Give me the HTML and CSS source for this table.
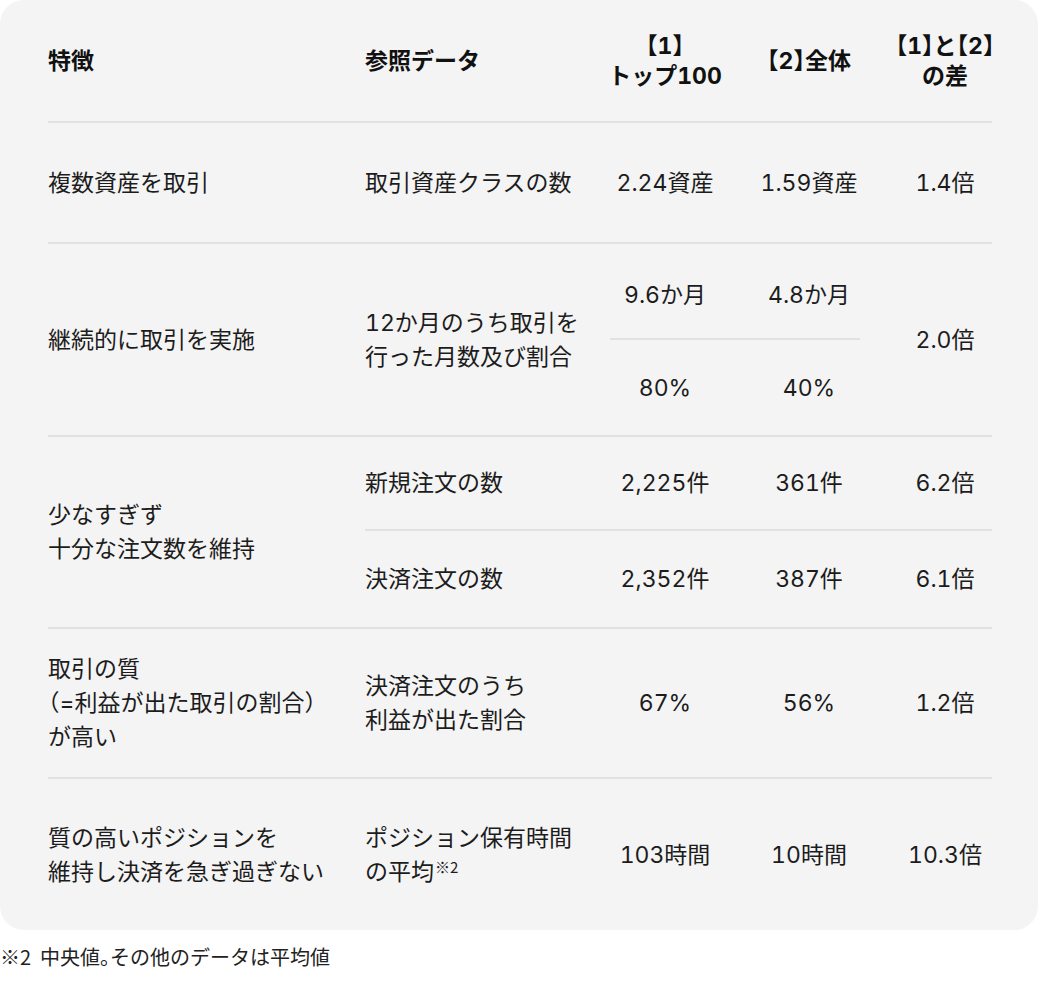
FILE: index.html
```html
<!DOCTYPE html>
<html lang="ja">
<head>
<meta charset="utf-8">
<title>比較表</title>
<link rel="stylesheet" href="styles.css">
</head>
<body>
<div class="card">
  <div class="row head">
    <div class="cell"><div class="in">特徴</div></div>
    <div class="cell"><div class="in">参照データ</div></div>
    <div class="cell c"><div class="in"><span class="p">【</span>1<span class="p">】</span><br>トップ100</div></div>
    <div class="cell c"><div class="in"><span class="p">【</span>2<span class="p">】</span>全体</div></div>
    <div class="cell c nw"><div class="in"><span class="p">【</span>1<span class="p">】</span>と<span class="p">【</span>2<span class="p">】</span><br>の差</div></div>
  </div>

  <div class="row r1">
    <div class="cell"><div class="in">複数資産を取引</div></div>
    <div class="cell"><div class="in">取引資産クラスの数</div></div>
    <div class="cell c"><div class="in">2.24資産</div></div>
    <div class="cell c"><div class="in">1.59資産</div></div>
    <div class="cell c"><div class="in">1.4倍</div></div>
  </div>

  <div class="row r2">
    <div class="cell span3"><div class="in">継続的に取引を実施</div></div>
    <div class="cell span3"><div class="in">12か月のうち取引を<br>行った月数及び割合</div></div>
    <div class="cell c top"><div class="in">9.6か月</div></div>
    <div class="cell c top"><div class="in">4.8か月</div></div>
    <div class="cell c span3 last"><div class="in">2.0倍</div></div>
    <div class="divider d34"></div>
    <div class="cell c bot"><div class="in">80%</div></div>
    <div class="cell c bot"><div class="in">40%</div></div>
  </div>

  <div class="row r3">
    <div class="cell span3"><div class="in">少なすぎず<br>十分な注文数を維持</div></div>
    <div class="cell top"><div class="in">新規注文の数</div></div>
    <div class="cell c top"><div class="in">2,225件</div></div>
    <div class="cell c top"><div class="in">361件</div></div>
    <div class="cell c top"><div class="in">6.2倍</div></div>
    <div class="divider d25"></div>
    <div class="cell bot"><div class="in">決済注文の数</div></div>
    <div class="cell c bot"><div class="in">2,352件</div></div>
    <div class="cell c bot"><div class="in">387件</div></div>
    <div class="cell c bot"><div class="in">6.1倍</div></div>
  </div>

  <div class="row r4">
    <div class="cell"><div class="in">取引の質<br><span class="p">（</span>=利益が出た取引の割合<span class="p">）</span><br>が高い</div></div>
    <div class="cell"><div class="in">決済注文のうち<br>利益が出た割合</div></div>
    <div class="cell c"><div class="in">67%</div></div>
    <div class="cell c"><div class="in">56%</div></div>
    <div class="cell c"><div class="in">1.2倍</div></div>
  </div>

  <div class="row r5">
    <div class="cell"><div class="in">質の高いポジションを<br>維持し決済を急ぎ過ぎない</div></div>
    <div class="cell"><div class="in">ポジション保有時間<br>の平均<sup class="mark">※2</sup></div></div>
    <div class="cell c"><div class="in">103時間</div></div>
    <div class="cell c"><div class="in">10時間</div></div>
    <div class="cell c"><div class="in">10.3倍</div></div>
  </div>
</div>
<p class="note">※2&nbsp;&nbsp;中央値<span class="p">。</span>その他のデータは平均値</p>
</body>
</html>
```

FILE: styles.css
```css
html, body {
  margin: 0;
  padding: 0;
  background: #ffffff;
}

body {
  font-family: "Inter", "Noto Sans CJK JP", sans-serif;
  color: #1c1c1c;
  width: 1040px;
}

.card {
  width: 1038px;
  box-sizing: border-box;
  padding: 0 46px 0 48px;
  background: #f4f4f4;
  border-radius: 24px;
}

.row {
  display: grid;
  grid-template-columns: 317px 245px 110px 178px 94px;
  width: 944px;
  border-bottom: 2px solid #e1e1e1;
  font-size: 23px;
  line-height: 34px;
  font-variant-numeric: tabular-nums;
}

.row.r5 {
  border-bottom: none;
}

.cell {
  display: flex;
  align-items: center;
  min-width: 0;
}

.cell.c {
  justify-content: center;
  text-align: center;
}

.in {
  flex: none;
}

.nw .in {
  white-space: nowrap;
}

.p {
  font-feature-settings: "halt";
}

.head {
  height: 121px;
  font-weight: 700;
  line-height: 30px;
  color: #111111;
}

.r1 {
  height: 119px;
}

.r2 {
  grid-template-rows: 94px 2px 95px;
}

.r2 .top {
  padding-top: 7px;
}

.r3 {
  grid-template-rows: 92px 2px 96px;
}

.r4 {
  height: 148px;
}

.r5 {
  height: 151px;
}

.span3 {
  grid-row: 1 / 4;
}

.top {
  grid-row: 1;
}

.bot {
  grid-row: 3;
}

.r2 .last {
  grid-column: 5;
}

.divider {
  grid-row: 2;
  background: #e1e1e1;
}

.d34 {
  grid-column: 3 / 5;
  margin-right: 38px;
}

.d25 {
  grid-column: 2 / 6;
}

.mark {
  font-family: "Noto Sans CJK JP", sans-serif;
  font-size: 15px;
  line-height: 0;
  vertical-align: 7px;
  margin-left: 1px;
}

.note {
  margin: 14px 0 0 0;
  font-family: "Noto Sans CJK JP", sans-serif;
  font-size: 20px;
  line-height: 26px;
  color: #222222;
}
```
